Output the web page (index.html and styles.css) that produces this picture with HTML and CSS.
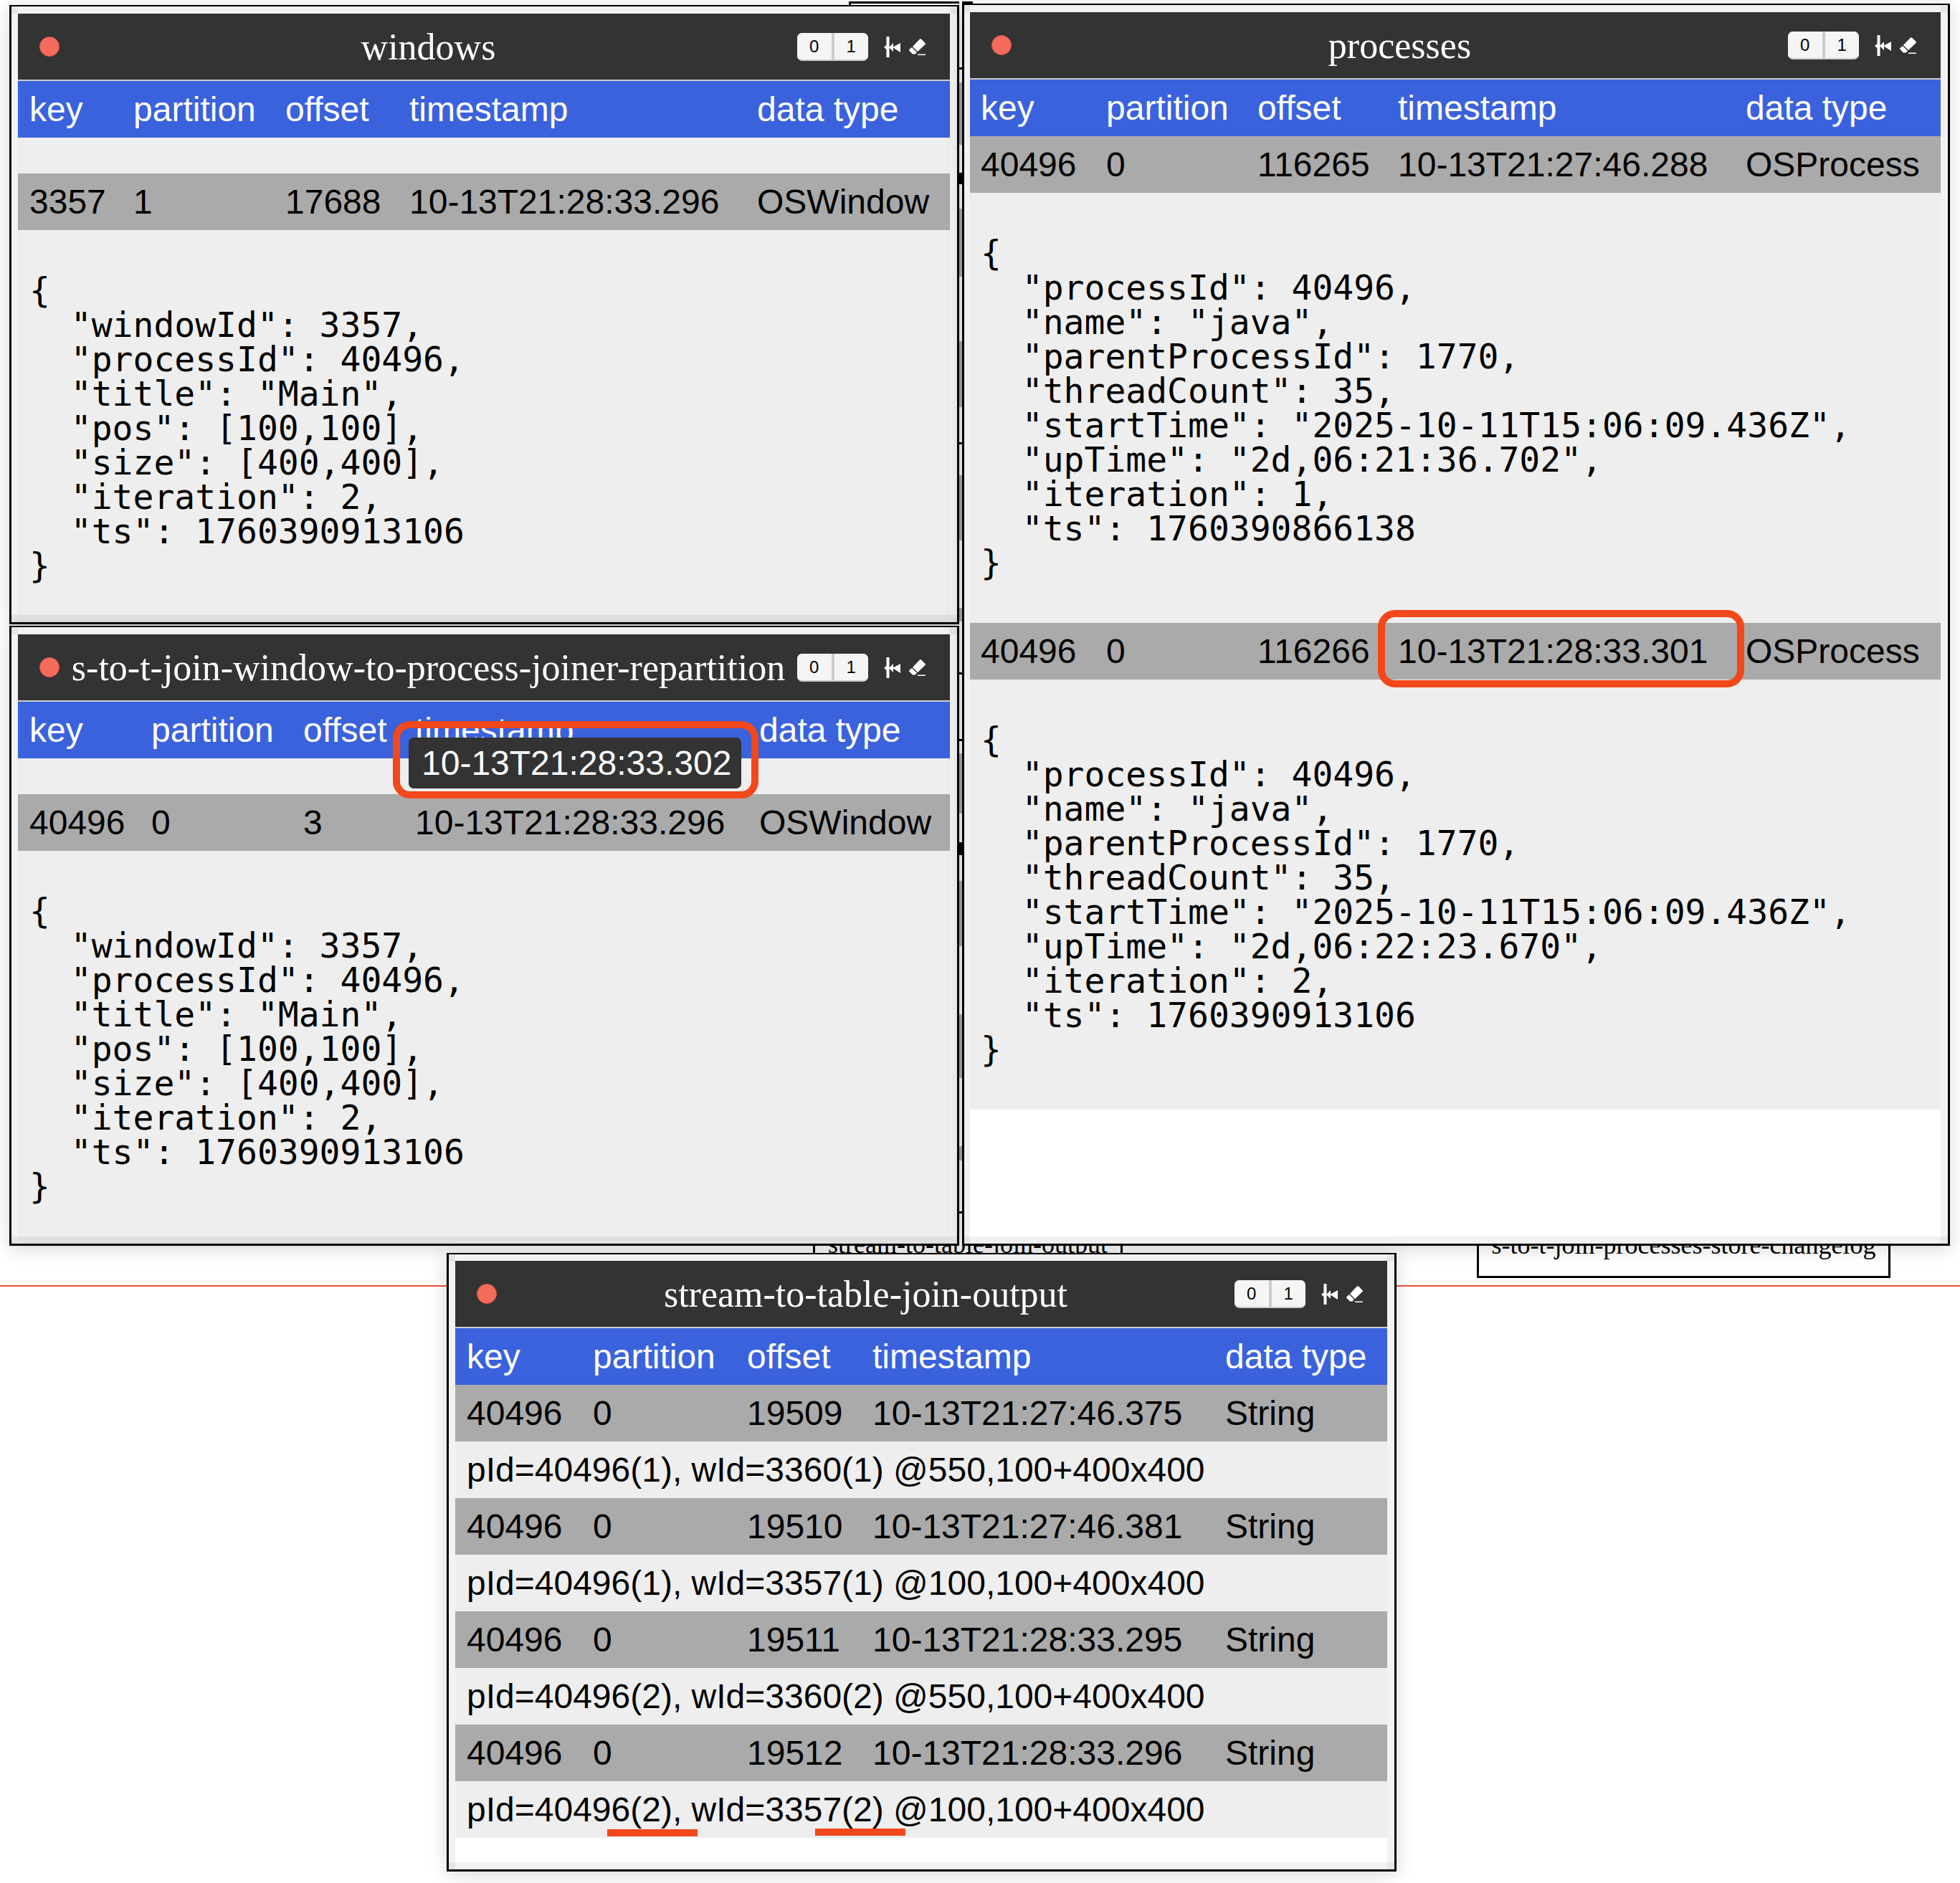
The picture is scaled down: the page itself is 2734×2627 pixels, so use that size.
FILE: index.html
```html
<!DOCTYPE html>
<html lang="en">
<head>
<meta charset="utf-8">
<title>Kafka topics</title>
<link rel="stylesheet" href="styles.css">
</head>
<body>
<main class="desktop">
  <div class="guide"></div>
  <div class="node node-top"></div>
  <div class="node node-output">stream-to-table-join-output</div>
  <div class="node node-store">s-to-t-join-processes-store-changelog</div>
  <div class="hidden-strip"></div>

  <section class="window win-windows">
    <header class="titlebar">
      <span class="dot"></span><h2 class="title">windows</h2>
      <div class="toggle"><span>0</span><span>1</span></div>
      <svg class="icon-back" viewBox="0 0 23 29"><path d="M3.5 0h4v29h-4zM0 15l3.5-3v6zM7 15l6-6v12zM12 15l11-6v13z"/></svg>
      <svg class="icon-eraser" viewBox="0 0 23 23"><path d="M15 .5q1-.7 2 0l5.500 5.500q1 1 0 2L12 18 5 11zM4 12l7 7-2.500 2.500H5L.5 17q-.8-1 0-2zM12 21.500h11V23H12z"/></svg>
    </header>
    <div class="pane">
      <div class="row head"><span>key</span><span>partition</span><span>offset</span><span>timestamp</span><span>data type</span></div>
      <div class="gap"></div>
      <div class="row rec"><span>3357</span><span>1</span><span>17688</span><span>10-13T21:28:33.296</span><span>OSWindow</span></div>
<pre class="json">{
  "windowId": 3357,
  "processId": 40496,
  "title": "Main",
  "pos": [100,100],
  "size": [400,400],
  "iteration": 2,
  "ts": 1760390913106
}</pre>
    </div>
  </section>

  <section class="window win-repart">
    <header class="titlebar">
      <span class="dot"></span><h2 class="title">s-to-t-join-window-to-process-joiner-repartition</h2>
      <div class="toggle"><span>0</span><span>1</span></div>
      <svg class="icon-back" viewBox="0 0 23 29"><path d="M3.5 0h4v29h-4zM0 15l3.5-3v6zM7 15l6-6v12zM12 15l11-6v13z"/></svg>
      <svg class="icon-eraser" viewBox="0 0 23 23"><path d="M15 .5q1-.7 2 0l5.500 5.500q1 1 0 2L12 18 5 11zM4 12l7 7-2.500 2.500H5L.5 17q-.8-1 0-2zM12 21.500h11V23H12z"/></svg>
    </header>
    <div class="pane">
      <div class="row head"><span>key</span><span>partition</span><span>offset</span><span>timestamp</span><span>data type</span></div>
      <div class="gap"></div>
      <div class="row rec"><span>40496</span><span>0</span><span>3</span><span>10-13T21:28:33.296</span><span>OSWindow</span></div>
<pre class="json">{
  "windowId": 3357,
  "processId": 40496,
  "title": "Main",
  "pos": [100,100],
  "size": [400,400],
  "iteration": 2,
  "ts": 1760390913106
}</pre>
    </div>
    <div class="tooltip">10-13T21:28:33.302</div>
  </section>

  <section class="window win-proc">
    <header class="titlebar">
      <span class="dot"></span><h2 class="title">processes</h2>
      <div class="toggle"><span>0</span><span>1</span></div>
      <svg class="icon-back" viewBox="0 0 23 29"><path d="M3.5 0h4v29h-4zM0 15l3.5-3v6zM7 15l6-6v12zM12 15l11-6v13z"/></svg>
      <svg class="icon-eraser" viewBox="0 0 23 23"><path d="M15 .5q1-.7 2 0l5.500 5.500q1 1 0 2L12 18 5 11zM4 12l7 7-2.500 2.500H5L.5 17q-.8-1 0-2zM12 21.500h11V23H12z"/></svg>
    </header>
    <div class="row head"><span>key</span><span>partition</span><span>offset</span><span>timestamp</span><span>data type</span></div>
    <div class="row rec"><span>40496</span><span>0</span><span>116265</span><span>10-13T21:27:46.288</span><span>OSProcess</span></div>
<pre class="json">{
  "processId": 40496,
  "name": "java",
  "parentProcessId": 1770,
  "threadCount": 35,
  "startTime": "2025-10-11T15:06:09.436Z",
  "upTime": "2d,06:21:36.702",
  "iteration": 1,
  "ts": 1760390866138
}</pre>
    <div class="row rec"><span>40496</span><span>0</span><span>116266</span><span>10-13T21:28:33.301</span><span>OSProcess</span></div>
<pre class="json">{
  "processId": 40496,
  "name": "java",
  "parentProcessId": 1770,
  "threadCount": 35,
  "startTime": "2025-10-11T15:06:09.436Z",
  "upTime": "2d,06:22:23.670",
  "iteration": 2,
  "ts": 1760390913106
}</pre>
  </section>

  <section class="window win-output">
    <header class="titlebar">
      <span class="dot"></span><h2 class="title">stream-to-table-join-output</h2>
      <div class="toggle"><span>0</span><span>1</span></div>
      <svg class="icon-back" viewBox="0 0 23 29"><path d="M3.5 0h4v29h-4zM0 15l3.5-3v6zM7 15l6-6v12zM12 15l11-6v13z"/></svg>
      <svg class="icon-eraser" viewBox="0 0 23 23"><path d="M15 .5q1-.7 2 0l5.500 5.500q1 1 0 2L12 18 5 11zM4 12l7 7-2.500 2.500H5L.5 17q-.8-1 0-2zM12 21.500h11V23H12z"/></svg>
    </header>
    <div class="row head"><span>key</span><span>partition</span><span>offset</span><span>timestamp</span><span>data type</span></div>
    <div class="row rec"><span>40496</span><span>0</span><span>19509</span><span>10-13T21:27:46.375</span><span>String</span></div>
    <div class="value">pId=40496(1), wId=3360(1) @550,100+400x400</div>
    <div class="row rec"><span>40496</span><span>0</span><span>19510</span><span>10-13T21:27:46.381</span><span>String</span></div>
    <div class="value">pId=40496(1), wId=3357(1) @100,100+400x400</div>
    <div class="row rec"><span>40496</span><span>0</span><span>19511</span><span>10-13T21:28:33.295</span><span>String</span></div>
    <div class="value">pId=40496(2), wId=3360(2) @550,100+400x400</div>
    <div class="row rec"><span>40496</span><span>0</span><span>19512</span><span>10-13T21:28:33.296</span><span>String</span></div>
    <div class="value">pId=40496(2), wId=3357(2) @100,100+400x400</div>
  </section>

  <div class="mark mark-tooltip"></div>
  <div class="mark mark-proc"></div>
  <div class="underline underline-p"></div>
  <div class="underline underline-w"></div>
</main>
</body>
</html>
```
FILE: styles.css
```css
* { box-sizing: border-box; }
html, body { margin: 0; padding: 0; background: #fff; }
.desktop { position: relative; width: 2734px; height: 2627px; overflow: hidden; background: #fff; font-family: "Liberation Sans", Arial, sans-serif; font-size: 48px; color: #000; }

.guide { position: absolute; left: 0; right: 0; top: 1793px; height: 2px; background: #f4503c; }
.node { position: absolute; border: 3px solid #000; background: #fff; font-family: "Liberation Serif", serif; font-size: 36px; text-align: center; white-space: nowrap; }
.node-top { left: 1184px; top: 2px; width: 173px; height: 30px; }
.node-output { left: 1134px; top: 1700px; width: 432px; height: 70px; padding-top: 12px; }
.node-store { left: 2060px; top: 1700px; width: 577px; height: 83px; padding-top: 13px; }
.hidden-strip {
  position: absolute; left: 1338px; top: 0; width: 4px; height: 1740px;
  background: linear-gradient(#fff 0 94px, #000 94px 97px, #fff 97px 115px, #b0b0b0 115px 202px, #fff 202px 241px, #000 241px 257px, #fff 257px 291px, #b0b0b0 291px 386px, #fff 386px 476px, #b0b0b0 476px 568px, #fff 568px 617px, #000 617px 620px, #fff 620px 663px, #b0b0b0 663px 754px, #fff 754px 848px, #b0b0b0 848px 867px, #fff 867px 938px, #000 938px 941px, #fff 941px 1031px, #000 1031px 1034px, #fff 1034px 1051px, #b0b0b0 1051px 1135px, #fff 1135px 1175px, #000 1175px 1193px, #fff 1193px 1229px, #b0b0b0 1229px 1320px, #fff 1320px 1415px, #b0b0b0 1415px 1504px, #fff 1504px 1599px, #b0b0b0 1599px 1619px, #fff 1619px 1690px, #000 1690px 1693px, #fff 1693px);
}

.window { --l: 9px; position: absolute; display: flex; flex-direction: column; padding: 10px 10px 0 var(--l); border-style: solid; border-color: #000; border-width: 2px 3px 3px; background: #fff; overflow: hidden; box-shadow: 0 4px 24px rgba(0, 0, 0, .16); }
.window::before { content: ""; position: absolute; inset: 0; border-style: solid; border-color: rgba(0, 0, 0, .05); border-width: 10px 0; pointer-events: none; z-index: 2; }
.window::after { content: ""; position: absolute; inset: 0; border-style: solid; border-color: rgba(0, 0, 0, .05); border-width: 0 10px 0 var(--l); pointer-events: none; z-index: 2; }
.win-windows { left: 13px; top: 7px; width: 1325px; height: 864px; --cols: 145px 212px 173px 485px 1fr; --pad: 16px; }
.win-repart { left: 13px; top: 873px; width: 1325px; height: 865px; --cols: 170px 212px 156px 480px 1fr; --pad: 16px; }
.win-proc { --l: 8px; left: 1342px; top: 5px; width: 1378px; height: 1733px; --cols: 175px 211px 196px 485px 1fr; --pad: 15px; }
.win-output { left: 623px; top: 1748px; width: 1325px; height: 863px; padding-top: 9px; --cols: 176px 215px 175px 492px 1fr; --pad: 16px; }

.titlebar { flex: none; display: flex; align-items: center; height: 94px; padding: 0 34px 0 30px; border-bottom: 2px solid #ccc; background: #333; color: #fff; }
.dot { flex: none; width: 28px; height: 28px; border-radius: 50%; background: #f56c5c; border: 1px solid #d9584a; }
.title { flex: 1; margin: 0; padding-top: 2px; text-align: center; font: 400 52px/60px "Liberation Serif", serif; white-space: nowrap; }
.toggle { flex: none; display: flex; gap: 4px; width: 99px; height: 39px; background: #ccc; border-radius: 7px; border-bottom: 2px solid #ccc; overflow: hidden; color: #000; font-size: 24px; line-height: 37px; text-align: center; }
.toggle span { flex: 1; background: #f5f5f5; }
.icon-back { flex: none; width: 23px; height: 29px; margin-left: 22px; fill: #fff; }
.icon-eraser { flex: none; width: 23px; height: 23px; margin-left: 12px; fill: #fff; }

.row { flex: none; display: grid; grid-template-columns: var(--cols); height: 79px; padding: 12px 0 12px var(--pad); line-height: 55px; white-space: nowrap; }
.head { background: #3b62dd; color: #fff; }
.rec { background: #aaa; }
.pane { flex: 1; min-height: 0; background: #eee; overflow: hidden; }
.gap { height: 50px; }
.json { margin: 0; padding: 60px 0 60px var(--pad); background: #eee; font: 48px/48px "DejaVu Sans Mono", monospace; }
.value { flex: none; height: 79px; padding: 12px 0 12px var(--pad); background: #eee; line-height: 55px; white-space: nowrap; }

.tooltip { position: absolute; left: 554px; top: 154px; width: 464px; height: 71px; padding-left: 18px; background: #333; color: #fff; border-radius: 7px; line-height: 71px; z-index: 1; }

.mark { position: absolute; border: 10px solid #f2481b; border-radius: 24px; }
.mark-tooltip { left: 548px; top: 1006px; width: 510px; height: 108px; }
.mark-proc { left: 1922px; top: 851px; width: 511px; height: 108px; }
.underline { position: absolute; height: 10px; width: 126px; background: #f2481b; }
.underline-p { left: 847px; top: 2552px; }
.underline-w { left: 1137px; top: 2551px; }
```
